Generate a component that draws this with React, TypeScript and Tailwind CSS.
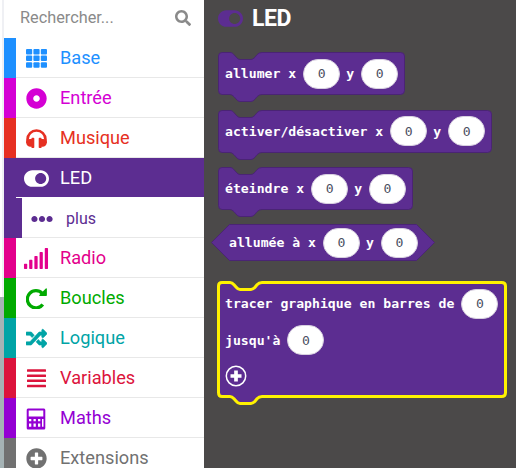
import type { ReactNode } from 'react';
import {
  FaDotCircle,
  FaEllipsisH,
  FaPlusCircle,
  FaRandom,
  FaSearch,
  FaSignal,
  FaToggleOn,
} from 'react-icons/fa';

function GridIcon() {
  return (
    <svg width="21" height="19" viewBox="0 0 21 19" fill="currentColor">
      {[0, 6.6, 13.2].map((y) =>
        [0, 7.4, 14.8].map((x) => <rect key={`${x}-${y}`} x={x} y={y} width="6.200" height="5.500" rx="1" />),
      )}
    </svg>
  );
}

function HeadphonesIcon() {
  return (
    <svg width="21" height="20" viewBox="0 0 21 20" fill="currentColor">
      <path d="M1.500 14V10.500A9 9 0 0 1 19.500 10.500V14" fill="none" stroke="currentColor" strokeWidth="2.600" />
      <path d="M4 10H5.500V9.200Q5.500 8.700 6 8.700H7.500Q8.300 8.700 8.300 9.500V18.200Q8.300 19 7.500 19H6Q5.500 19 5.500 18.500V17.700H4Q.2 17 .2 13.500T4 10Z" />
      <path d="M17 10H15.500V9.200Q15.500 8.700 15 8.700H13.500Q12.700 8.700 12.700 9.500V18.200Q12.700 19 13.500 19H15Q15.500 19 15.500 18.500V17.700H17Q20.800 17 20.800 13.500T17 10Z" />
    </svg>
  );
}

function RepeatIcon() {
  return (
    <svg width="21" height="21" viewBox="0 0 21 21" fill="currentColor">
      <path d="M16.200 5.400A8.600 8.600 0 1 0 16.800 16.500" fill="none" stroke="currentColor" strokeWidth="3.300" />
      <path d="M20.900 .9V7.200Q20.900 8 20.100 8H13.800Q12.800 7.800 13.300 6.900L19.800 .4Q20.700 0 20.900 .9Z" />
    </svg>
  );
}

function LinesIcon() {
  return (
    <svg width="19" height="19" viewBox="0 0 19 19" fill="currentColor">
      {[0.2, 5.4, 10.6, 15.8].map((y) => (
        <rect key={y} y={y} width="19" height="2.500" rx=".5" />
      ))}
    </svg>
  );
}

function CalculatorIcon() {
  return (
    <svg width="20" height="22" viewBox="0 0 20 22" fill="currentColor">
      <path
        fillRule="evenodd"
        d="M2 .5H18Q19.300 .5 19.300 2V20Q19.300 21.500 18 21.500H2Q.7 21.500 .7 20V2Q.7 .5 2 .5ZM2.700 2.500V8.500H17.300V2.500ZM3 11V13.300H5.300V11ZM7.500 11V13.300H9.800V11ZM12 11V13.300H14.300V11ZM3 15.600V18.800H5.300V15.600ZM7.500 15.600V18.800H9.800V15.600ZM12 15.600V18.800H14.300V15.600ZM16 11V18.800H17.500V11Z"
      />
    </svg>
  );
}

type CategoryProps = { label: string; strip: string; text: string; icon: ReactNode };

function Category({ label, strip, text, icon }: CategoryProps) {
  return (
    <div className="flex h-10 shrink-0">
      <div className={`w-3 shrink-0 ${strip}`} />
      <div className={`flex flex-1 items-center border-b border-[#e8e8e8] pl-2 pt-0.5 ${text}`}>
        <span className="flex w-6 shrink-0 justify-center">{icon}</span>
        <span className="ml-3 text-[18.2px] leading-none">{label}</span>
      </div>
    </div>
  );
}

function Value() {
  return (
    <span className="flex h-[30px] w-[37px] shrink-0 items-center justify-center rounded-[15px] border border-[#d8d0e0] bg-white font-normal text-[#4b4f62]">
      0
    </span>
  );
}

function Block({ width, height, selected = false, children }: { width: number; height: number; selected?: boolean; children: ReactNode }) {
  const w = width - 0.5;
  const h = height - 0.5;
  const d = `M.5 4Q.5 .5 4 .5H12C14 .5 15 1.500 16 2.700L18 5Q20 7.500 22 7.500H33Q35 7.500 37 5.200L39 2.700Q41 .5 44 .5H${w - 4}Q${w} .5 ${w} 4V${h - 4}Q${w} ${h} ${w - 4} ${h}H44Q41 ${h} 39 ${h + 2.2}L37 ${h + 4.7}Q35 ${h + 7} 33 ${h + 7}H22Q20 ${h + 7} 18 ${h + 4.5}L16 ${h + 2.2}Q14 ${h} 12 ${h}H4Q.5 ${h} .5 ${h - 4}Z`;
  return (
    <div className="relative" style={{ width, height }}>
      <svg className="absolute left-0 top-0 overflow-visible" width={width} height={height + 8}>
        <path d={d} fill="#5c2d91" stroke={selected ? '#fff200' : '#4a2474'} strokeWidth={selected ? 3 : 1} />
      </svg>
      <div className="relative pl-[7px]">{children}</div>
    </div>
  );
}

function Coordinates({ label }: { label: string }) {
  return (
    <div className="flex h-[43px] items-center whitespace-pre">
      <span>{label} x</span>
      <span className="ml-[7px] flex"><Value /></span>
      <span className="ml-[6px] mr-[7px]">y</span>
      <Value />
    </div>
  );
}

export default function App() {
  return (
    <div className="flex h-[468px] w-[516px] overflow-hidden bg-[#4b4949] font-[Roboto,sans-serif]">
      <div className="flex w-1 shrink-0 flex-col bg-[#eff0f4]">
        <div className="h-[297px] w-0.5 bg-white" />
        <div className="flex-1 bg-[#a5b3b5]" />
      </div>
      <aside className="flex w-[200px] shrink-0 flex-col bg-white">
        <div className="flex h-[38px] shrink-0 items-center justify-between pb-[2px] pl-4 pr-[13px] text-[#8a8a8a]">
          <span className="text-[16.3px]">Rechercher...</span>
          <FaSearch size={16} />
        </div>
        <Category label="Base" strip="bg-[#1e90ff]" text="text-[#1e90ff]" icon={<GridIcon />} />
        <Category label="Entrée" strip="bg-[#d400d4]" text="text-[#d400d4]" icon={<FaDotCircle size={21} />} />
        <Category label="Musique" strip="bg-[#e63022]" text="text-[#e63022]" icon={<HeadphonesIcon />} />
        <div className="flex h-[39px] shrink-0 items-center bg-[#5c2d91] pl-5 pt-0.5 text-white">
          <FaToggleOn size={25} />
          <span className="ml-[11px] text-[18.2px] leading-none">LED</span>
        </div>
        <div className="flex h-[41px] shrink-0 text-[#5c2d91]">
          <div className="w-3 bg-[#5c2d91]" />
          <div className="mt-px w-1.5 bg-[#5c2d91]" />
          <div className="flex flex-1 items-center border-b border-[#e8e8e8] pl-[9px] pt-[3px]">
            <FaEllipsisH size={22} />
            <span className="ml-[13px] text-[16px]">plus</span>
          </div>
        </div>
        <Category label="Radio" strip="bg-[#e3008c]" text="text-[#e3008c]" icon={<FaSignal className="h-[21px] w-[26px] shrink-0" />} />
        <Category label="Boucles" strip="bg-[#00aa00]" text="text-[#00aa00]" icon={<RepeatIcon />} />
        <Category label="Logique" strip="bg-[#00a4a6]" text="text-[#00a4a6]" icon={<FaRandom size={21} stroke="currentColor" strokeWidth={14} />} />
        <Category label="Variables" strip="bg-[#dc143c]" text="text-[#dc143c]" icon={<LinesIcon />} />
        <Category label="Maths" strip="bg-[#9400d3]" text="text-[#9400d3]" icon={<CalculatorIcon />} />
        <Category label="Extensions" strip="bg-[#717171]" text="text-[#717171]" icon={<FaPlusCircle size={21} />} />
      </aside>
      <main className="flex-1 pl-[14px] font-['DejaVu_Sans_Mono',monospace] text-[13.15px] font-bold leading-none text-white">
        <div className="flex h-[52px] items-center pb-4 font-[Roboto,sans-serif]">
          <FaToggleOn size={25} color="#5c2d91" />
          <span className="ml-[9px] text-[23px] font-bold tracking-[-0.5px]">LED</span>
        </div>
        <div className="flex flex-col gap-[14.6px]">
          <Block width={187} height={43}><Coordinates label="allumer" /></Block>
          <Block width={274} height={43}><Coordinates label="activer/désactiver" /></Block>
          <Block width={195} height={43}><Coordinates label="éteindre" /></Block>
        </div>
        <div className="relative -ml-[7px] mt-[14px] flex h-[37px] w-[224px] items-center">
          <svg className="absolute left-0 top-0" width="224" height="37">
            <path d="M.5 18.500L18.500 .5H205.500L223.500 18.500L205.500 36.500H18.500Z" fill="#5c2d91" stroke="#4a2474" />
          </svg>
          <div className="relative pl-[18px]"><Coordinates label="allumée à" /></div>
        </div>
        <div className="mt-[21px]">
          <Block width={288} height={115} selected>
            <div className="flex h-[43px] items-center">
              <span className="whitespace-nowrap">tracer graphique en barres de</span>
              <span className="ml-[7px] flex"><Value /></span>
            </div>
            <div className="flex h-[30px] items-center">
              <span>jusqu'à</span>
              <span className="ml-[7px] flex"><Value /></span>
            </div>
            <svg className="mt-[10px]" width="22" height="22" viewBox="0 0 22 22">
              <circle cx="11" cy="11" r="9.700" fill="none" stroke="white" strokeWidth="1.500" />
              <path d="M11 5.500V16.500M5.500 11H16.500" stroke="white" strokeWidth="3.700" />
            </svg>
          </Block>
        </div>
      </main>
    </div>
  );
}
